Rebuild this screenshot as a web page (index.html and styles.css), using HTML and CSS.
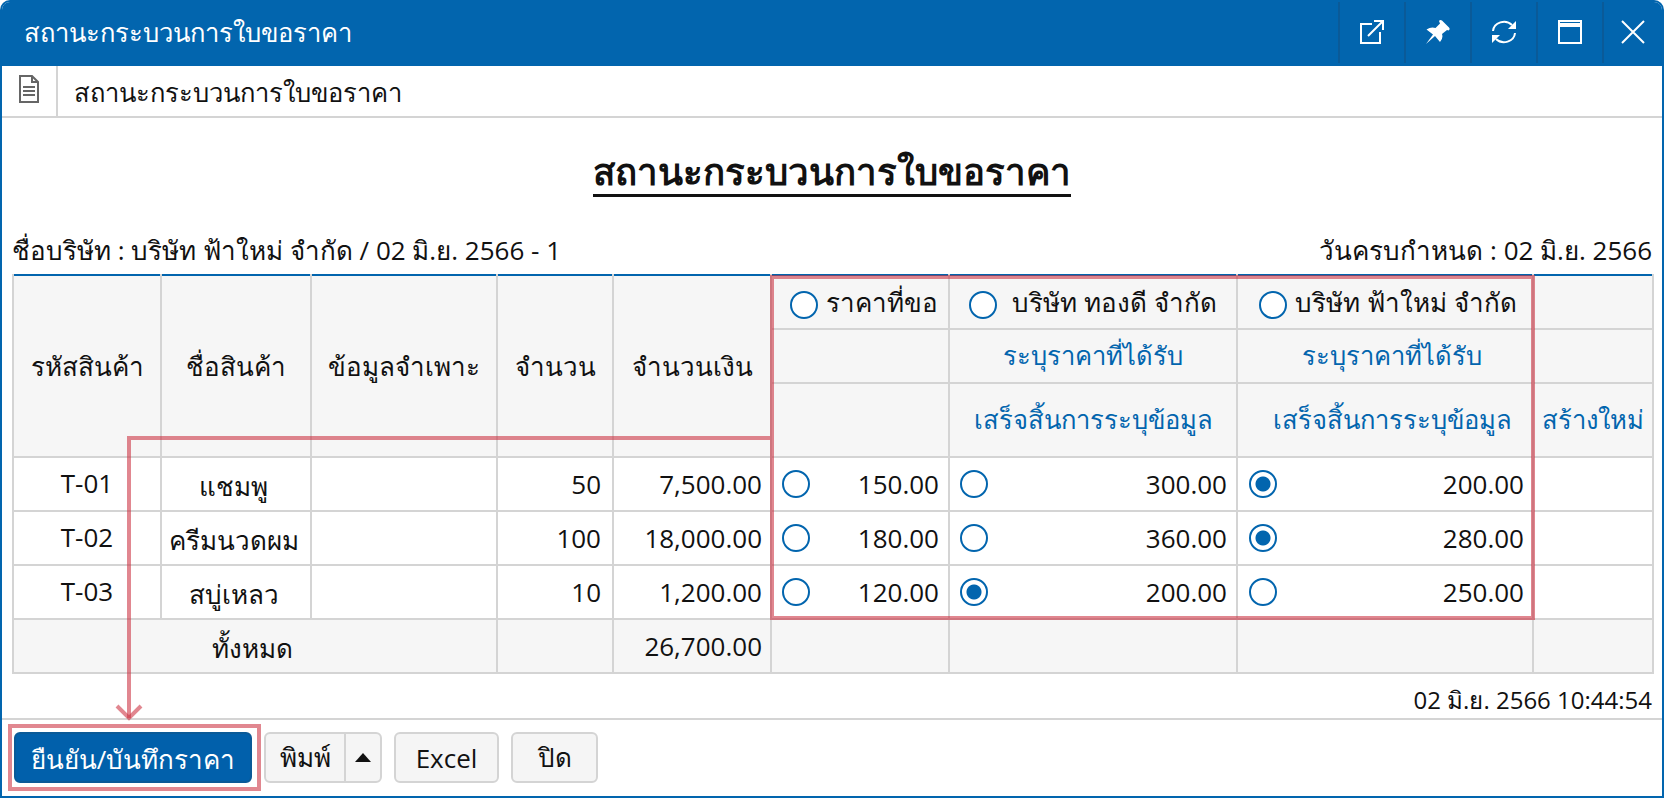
FILE: index.html
```html
<!DOCTYPE html>
<html lang="th">
<head>
    <meta charset="UTF-8">
    <title>สถานะกระบวนการใบขอราคา</title>
    <link rel="stylesheet" href="styles.css">
</head>
<body>

<div class="window">
    <div class="titlebar">
        <div class="titlebar-text">สถานะกระบวนการใบขอราคา</div>
        <button class="win-btn" type="button">
            <svg width="24" height="24" viewBox="0 0 24 24" fill="none" stroke="#fff" stroke-width="2">
                <path d="M12 4H1v19h19V12"/>
                <path d="M8 16L23 1M14 1h9v9"/>
            </svg>
        </button>
        <button class="win-btn" type="button">
            <svg width="24" height="24" viewBox="0 0 24 24" fill="#fff">
                <path d="M13 1Q14-.5 16 .5L23 7.5Q24.5 9.5 22.5 10.5L21 10L16 14Q17.5 18 14 22L9 16L0 24L7 14.5L.5 9.5Q5 6.5 9.5 8L14 3.5Z"/>
            </svg>
        </button>
        <button class="win-btn" type="button">
            <svg width="24" height="24" viewBox="0 0 24 24" fill="none" stroke="#fff" stroke-width="2">
                <path d="M1 11A11 10 0 0 1 20 5"/>
                <path d="M23 13A11 10 0 0 1 4 19"/>
                <path d="M24 1v8h-8z" fill="#fff" stroke="none"/>
                <path d="M0 23v-8h8z" fill="#fff" stroke="none"/>
            </svg>
        </button>
        <button class="win-btn" type="button">
            <svg width="24" height="24" viewBox="0 0 24 24" fill="none" stroke="#fff" stroke-width="2">
                <rect x="1" y="1" width="22" height="22"/>
                <path d="M1 5h22" stroke-width="4"/>
            </svg>
        </button>
        <button class="win-btn" type="button">
            <svg width="24" height="24" viewBox="0 0 24 24" fill="none" stroke="#fff" stroke-width="2">
                <path d="M1 1l22 22M23 1L1 23"/>
            </svg>
        </button>
    </div>

    <div class="subbar">
        <div class="subbar-icon">
            <svg width="20" height="28" viewBox="0 0 20 28" fill="none" stroke="#666" stroke-width="2">
                <path d="M1 1h12l6 6v20H1z"/>
                <path d="M13 1v6h6" />
                <path d="M4 12h12M4 16h12M4 20h12"/>
            </svg>
        </div>
        <div class="subbar-text">สถานะกระบวนการใบขอราคา</div>
    </div>

    <div class="content">
        <h1 class="page-title">สถานะกระบวนการใบขอราคา</h1>
        <div class="info-row">
            <span>ชื่อบริษัท : บริษัท ฟ้าใหม่ จำกัด / 02 มิ.ย. 2566 - 1</span>
            <span>วันครบกำหนด : 02 มิ.ย. 2566</span>
        </div>

        <table class="price-table">
            <colgroup>
                <col class="c1"><col class="c2"><col class="c3"><col class="c4"><col class="c5">
                <col class="c6"><col class="c7"><col class="c8"><col class="c9">
            </colgroup>
            <thead>
                <tr class="row-head">
                    <th rowspan="3">รหัสสินค้า</th>
                    <th rowspan="3">ชื่อสินค้า</th>
                    <th rowspan="3">ข้อมูลจำเพาะ</th>
                    <th rowspan="3">จำนวน</th>
                    <th rowspan="3">จำนวนเงิน</th>
                    <th class="offset-a"><span class="radio"></span>ราคาที่ขอ</th>
                    <th><span class="radio"></span>&nbsp;บริษัท ทองดี จำกัด</th>
                    <th class="offset-b"><span class="radio"></span>บริษัท ฟ้าใหม่ จำกัด</th>
                    <th></th>
                </tr>
                <tr class="row-head">
                    <th></th>
                    <th class="link">ระบุราคาที่ได้รับ</th>
                    <th class="link link-right">ระบุราคาที่ได้รับ</th>
                    <th></th>
                </tr>
                <tr class="row-head-tall">
                    <th></th>
                    <th class="link">เสร็จสิ้นการระบุข้อมูล</th>
                    <th class="link link-right">เสร็จสิ้นการระบุข้อมูล</th>
                    <th class="link">สร้างใหม่</th>
                </tr>
            </thead>
            <tbody>
                <tr>
                    <td class="code">T-01</td>
                    <td class="name">แชมพู</td>
                    <td></td>
                    <td class="num qty">50</td>
                    <td class="num">7,500.00</td>
                    <td class="cell-price"><div class="price"><span class="radio"></span>150.00</div></td>
                    <td class="cell-price"><div class="price"><span class="radio"></span>300.00</div></td>
                    <td class="tight"><div class="price"><span class="radio checked"></span>200.00</div></td>
                    <td></td>
                </tr>
                <tr>
                    <td class="code">T-02</td>
                    <td class="name">ครีมนวดผม</td>
                    <td></td>
                    <td class="num qty">100</td>
                    <td class="num">18,000.00</td>
                    <td class="cell-price"><div class="price"><span class="radio"></span>180.00</div></td>
                    <td class="cell-price"><div class="price"><span class="radio"></span>360.00</div></td>
                    <td class="tight"><div class="price"><span class="radio checked"></span>280.00</div></td>
                    <td></td>
                </tr>
                <tr>
                    <td class="code">T-03</td>
                    <td class="name">สบู่เหลว</td>
                    <td></td>
                    <td class="num qty">10</td>
                    <td class="num">1,200.00</td>
                    <td class="cell-price"><div class="price"><span class="radio"></span>120.00</div></td>
                    <td class="cell-price"><div class="price"><span class="radio checked"></span>200.00</div></td>
                    <td class="tight"><div class="price"><span class="radio"></span>250.00</div></td>
                    <td></td>
                </tr>
                <tr class="row-total">
                    <td colspan="3" class="name">ทั้งหมด</td>
                    <td></td>
                    <td class="num">26,700.00</td>
                    <td></td>
                    <td></td>
                    <td></td>
                    <td></td>
                </tr>
            </tbody>
        </table>

        <div class="timestamp">02 มิ.ย. 2566 10:44:54</div>
    </div>

    <div class="footer">
        <button class="btn btn-primary" type="button">ยืนยัน/บันทึกราคา</button>
        <div class="btn-split">
            <button class="btn-part" type="button">พิมพ์</button>
            <button class="btn-part btn-caret" type="button"><span class="caret"></span></button>
        </div>
        <button class="btn btn-excel" type="button">Excel</button>
        <button class="btn btn-close" type="button">ปิด</button>
    </div>

    <!-- คำอธิบายประกอบสีแดงบนภาพ -->
    <svg class="notes" width="1664" height="798" viewBox="0 0 1664 798" fill="none" stroke="#cc3040" stroke-opacity="0.58" stroke-width="4">
        <rect x="772" y="277" width="761" height="341"/>
        <path d="M770 438H129V718"/>
        <path d="M117 706L129 718L141 706"/>
        <rect x="10" y="726" width="249" height="63"/>
    </svg>
</div>

</body>
</html>
```

FILE: styles.css
```css
* {
    box-sizing: border-box;
}
body {
    margin: 0;
    padding: 0;
    background: white;
    font-family: "Open Sans", "Noto Sans", sans-serif;
    font-size: 26px;
    color: #111;
}
button {
    font-family: inherit;
    font-size: inherit;
    color: inherit;
    cursor: pointer;
}
.window {
    position: relative;
    width: 1664px;
    height: 798px;
    display: flex;
    flex-direction: column;
    border: 2px solid #0265ae;
    border-radius: 10px 10px 0 0;
    overflow: hidden;
}
.titlebar {
    display: flex;
    height: 66px;
    flex-shrink: 0;
    margin-top: -2px;
    padding-bottom: 3px;
    background: #0265ae;
    color: white;
}
.titlebar-text {
    flex: 1;
    padding-left: 22px;
    font-size: 25.6px;
    line-height: 66px;
}
.win-btn {
    width: 66px;
    padding: 0;
    display: flex;
    align-items: center;
    justify-content: center;
    background: none;
    border: none;
    border-left: 2px solid #0a5a98;
}
.win-btn:last-child {
    width: 60px;
}
.subbar {
    display: flex;
    height: 52px;
    flex-shrink: 0;
    border-bottom: 2px solid #d4d4d4;
}
.subbar-icon {
    width: 56px;
    display: flex;
    align-items: center;
    justify-content: center;
    padding-bottom: 4px;
    border-right: 2px solid #d4d4d4;
}
.subbar-text {
    padding-left: 16px;
    font-size: 25.6px;
    line-height: 54px;
}
.content {
    flex: 1;
    padding: 0 10px;
}
.page-title {
    margin: 23px 0 0;
    height: 60px;
    text-align: center;
    font-size: 36.6px;
    line-height: 60px;
    font-weight: bold;
    text-decoration: underline;
    text-underline-offset: 9px;
}
.info-row {
    display: flex;
    justify-content: space-between;
    margin-top: 26px;
    height: 47px;
    line-height: 47px;
}
.price-table {
    width: 1640px;
    table-layout: fixed;
    border-collapse: collapse;
    border-top: 2px solid #0265ae;
}
.c1 { width: 148px; }
.c2 { width: 150px; }
.c3 { width: 186px; }
.c4 { width: 116px; }
.c5 { width: 158px; }
.c6 { width: 178px; }
.c7 { width: 288px; }
.c8 { width: 296px; }
.c9 { width: 120px; }
.price-table th,
.price-table td {
    border: 2px solid #d4d4d4;
    padding: 0 10px;
    white-space: nowrap;
    font-weight: normal;
}
.price-table thead tr:first-child th {
    border-top: none;
}
.price-table th {
    background: #f6f6f6;
    text-align: center;
}
.price-table tr {
    height: 54px;
}
.price-table tr.row-head-tall {
    height: 74px;
}
.price-table .row-total td {
    background: #f6f6f6;
}
.price-table .offset-a {
    padding-left: 18px;
}
.price-table .offset-b {
    padding-left: 16px;
}
.price-table .link {
    color: #0265ae;
    font-size: 25.6px;
    padding: 0;
}
.price-table .link-right {
    padding-left: 14px;
}
.price-table .code {
    padding: 0 0 2px;
    text-align: center;
}
.price-table .name {
    text-align: center;
    padding: 4px 5px 0 0;
}
.price-table .num {
    text-align: right;
    padding-right: 8px;
}
.price-table .qty {
    padding-right: 11px;
}
.price-table .cell-price {
    padding-right: 9px;
}
.price-table .tight {
    padding: 0 8px 0 11px;
}
.price {
    display: flex;
    justify-content: space-between;
    align-items: center;
}
.radio {
    display: inline-block;
    width: 28px;
    height: 28px;
    border: 2px solid #0265ae;
    border-radius: 50%;
    background: white;
    vertical-align: middle;
    margin-right: 8px;
}
.radio.checked {
    background: radial-gradient(circle, #0265ae 0, #0265ae 7px, white 8px);
}
.timestamp {
    margin-top: 10px;
    text-align: right;
    font-size: 24px;
    line-height: 32px;
}
.footer {
    display: flex;
    gap: 12px;
    flex-shrink: 0;
    height: 78px;
    padding: 12px 0 0 12px;
    border-top: 2px solid #d4d4d4;
}
.btn,
.btn-split {
    height: 51px;
    border: 2px solid #d4d4d4;
    border-radius: 6px;
    background: #f5f5f5;
}
.btn-primary {
    width: 238px;
    padding-top: 4px;
    background: #0160ab;
    border-color: #0a5a98;
    color: white;
}
.btn-split {
    display: flex;
    width: 118px;
}
.btn-part {
    width: 81px;
    padding: 0;
    border: none;
    background: none;
}
.btn-caret {
    width: 37px;
    display: flex;
    align-items: center;
    justify-content: center;
    border-left: 2px solid #d4d4d4;
}
.caret {
    border-left: 8px solid transparent;
    border-right: 8px solid transparent;
    border-bottom: 9px solid #111;
}
.btn-excel {
    width: 105px;
}
.btn-close {
    width: 87px;
}
.notes {
    position: absolute;
    left: -2px;
    top: -2px;
    pointer-events: none;
}
```
